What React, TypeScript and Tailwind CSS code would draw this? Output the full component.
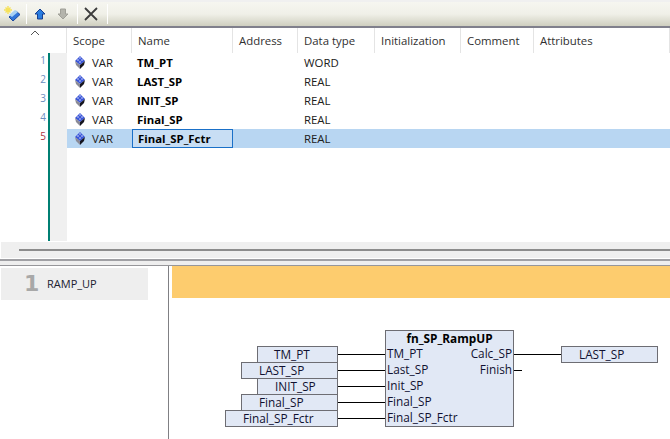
const font = "font-['Open_Sans','DejaVu_Sans',sans-serif]";

const cols = [
  { w: 'w-[65px] shadow-[-1px_0_0_#e4e4e4]', label: 'Scope' },
  { w: 'w-[101px]', label: 'Name' },
  { w: 'w-[65px]', label: 'Address' },
  { w: 'w-[77px]', label: 'Data type' },
  { w: 'w-[86px]', label: 'Initialization' },
  { w: 'w-[73px]', label: 'Comment' },
  { w: 'w-[136px]', label: 'Attributes' },
];

const rows = [
  { n: 1, name: 'TM_PT', type: 'WORD' },
  { n: 2, name: 'LAST_SP', type: 'REAL' },
  { n: 3, name: 'INIT_SP', type: 'REAL' },
  { n: 4, name: 'Final_SP', type: 'REAL' },
  { n: 5, name: 'Final_SP_Fctr', type: 'REAL', selected: true },
];

function VarIcon() {
  return (
    <svg width="10" height="13" viewBox="0 0 10 13" className="shrink-0">
      <path d="M5 0 10 5 5 9 0 5z" fill="#3a55d8" />
      <path d="M0 5 5 9v4L1 9z" fill="#8a8a96" />
      <path d="M10 5 5 9v4l4-4z" fill="#15151f" />
      <path d="M5 1 6 2 5 3 4 2zM3 3 4 4 3 5 2 4zM7 3 8 4 7 5 6 4zM5 5 6 6 5 7 4 6z" fill="#c4d0f4" />
    </svg>
  );
}

function Toolbar() {
  return (
    <div className="h-[24px] flex items-center bg-gradient-to-b from-[#f6f6f0] via-[#f0f0e8] to-[#cfcfc0]">
      <svg width="20" height="20" viewBox="0 0 20 20" className="ml-[3px] mr-[2px]">
        <path d="M6 13 13 7l4 3.5-7 6.5z" fill="#2f74d8" stroke="#1c4aa0" strokeWidth="1" />
        <path d="M6 11l6-5 3 2-6 5z" fill="#a6d0f4" />
        <path d="M5 2v8M1 6h8M2.5 3.5l5 5M7.5 3.5l-5 5" stroke="#f6e25a" strokeWidth="1.4" />
      </svg>
      <div className="w-px h-[20px] bg-white ml-[1px]" />
      <svg width="12" height="12" viewBox="0 0 12 12" className="ml-[7px]">
        <path d="M6 1 11 6H8.5v5h-5V6H1z" fill="#2a7de0" stroke="#163f90" strokeWidth="1" />
      </svg>
      <svg width="12" height="12" viewBox="0 0 12 12" className="ml-[11px]">
        <path d="M6 11 1 6h2.5V1h5v5H11z" fill="#b4b4ac" stroke="#a0a098" strokeWidth="1" />
      </svg>
      <div className="w-px h-[20px] bg-white ml-[8px]" />
      <svg width="16" height="16" viewBox="0 0 16 16" className="ml-[5px]">
        <path d="M2 2 14 14M14 2 2 14" stroke="#3c3c3c" strokeWidth="1.8" />
      </svg>
      <div className="w-px h-[20px] bg-white ml-[8px]" />
    </div>
  );
}

function VarTable() {
  return (
    <div className="flex h-[214px]">
      <div className="w-[48px] relative shrink-0">
        <svg width="10" height="6" viewBox="0 0 10 6" className="ml-[30px] mt-[2px]">
          <path d="M1 5 5 1l4 4" fill="none" stroke="#555" strokeWidth="1" />
        </svg>
        <div className="mt-[15px] flex flex-col items-end pr-[2px]">
          {rows.map((r) => (
            <div
              key={r.n}
              className={`h-[19px] text-[10px] leading-[19px] ${r.selected ? 'text-[#b03040]' : 'text-[#6a8cc0]'}`}
            >
              {r.n}
            </div>
          ))}
        </div>
      </div>
      <div className="w-[2px] mt-[25px] mb-[1px] bg-[#007f73] shrink-0" />
      <div className="w-[17px] mt-[25px] mb-[1px] bg-[#f0f0f0] shrink-0" />
      <div className="flex-1">
        <div className="flex h-[25px]">
          {cols.map((c) => (
            <div
              key={c.label}
              className={`${c.w} border-r border-[#e4e4e4] pl-[6px] leading-[25px] text-[#303030]`}
            >
              {c.label}
            </div>
          ))}
        </div>
        {rows.map((r) => (
          <div
            key={r.n}
            className={`flex h-[19px] leading-[19px] text-[#202020] ${r.selected ? 'bg-[#b8d6f2]' : ''}`}
          >
            <div className="w-[65px] flex items-center gap-[7px] pl-[8px]">
              <VarIcon />
              <span>VAR</span>
            </div>
            <div
              className={`w-[101px] pl-[5px] font-bold text-black ${r.selected ? 'bg-[#c8def4] border border-[#1a70c8] pl-[4px] leading-[17px]' : ''}`}
            >
              {r.name}
            </div>
            <div className="w-[65px]" />
            <div className="pl-[6px]">{r.type}</div>
          </div>
        ))}
      </div>
    </div>
  );
}

function Splitter() {
  return (
    <>
      <div className="h-[16px] bg-[#efefef] flex items-center pl-[18px] ml-[1px]">
        <div className="h-[2px] flex-1 bg-[#8c8c8c]" />
      </div>
      <div className="h-[2px] mt-[1px] bg-[#a0a0a4]" />
      <div className="h-[4px] bg-[#eeeeee]" />
      <div className="h-[1px] bg-[#96969a]" />
    </>
  );
}

function Box({ x, y, w, label, pl }: { x: number; y: number; w: number; label: string; pl: number }) {
  return (
    <div
      className="absolute h-[17px] bg-[#e1e8f5] border border-[#6d6d73] leading-[14px] text-[11.8px] text-[#101030] whitespace-nowrap"
      style={{ left: x, top: y, width: w, paddingLeft: pl }}
    >
      {label}
    </div>
  );
}

function Network() {
  const wires = [88, 104, 120, 136, 152];
  return (
    <div className="relative flex-1 flex overflow-hidden">
      <div className="w-[168px] shrink-0">
        <div className="ml-[1px] mt-[2px] w-[147px] h-[32px] bg-[#eeeeee] flex items-center">
          <span className="ml-[23px] w-[23px] text-[22px] leading-none font-bold text-[#a8a8a8] font-['DejaVu_Sans',sans-serif]">
            1
          </span>
          <span className="text-[#202030] text-[11px]">RAMP_UP</span>
        </div>
      </div>
      <div className="w-[1px] bg-[#808084] shrink-0" />
      <div className="flex-1 pl-[3px]">
        <div className="h-[32px] bg-[#fdcc6e]" />
      </div>

      <svg width="670" height="173" className="absolute left-0 top-0" fill="none">
        {wires.map((y) => (
          <path key={y} d={`M338 ${y + 0.5}H385`} stroke="#000" />
        ))}
        <path d="M514 88.5H561M514 104.5H522" stroke="#000" />
      </svg>

      <Box x={257} y={80} w={81} label="TM_PT" pl={16} />
      <Box x={241} y={96} w={97} label="LAST_SP" pl={17} />
      <Box x={257} y={112} w={81} label="INIT_SP" pl={17} />
      <Box x={241} y={128} w={97} label="Final_SP" pl={17} />
      <Box x={225} y={144} w={113} label="Final_SP_Fctr" pl={17} />
      <Box x={561} y={80} w={97} label="LAST_SP" pl={17} />

      <div className="absolute left-[385px] top-[64px] w-[129px] h-[97px] bg-[#e1e8f5] border border-[#6d6d73] text-[11.8px] text-[#101030] px-[1px]">
        <div className="text-center font-bold text-black leading-[14px]">fn_SP_RampUP</div>
        <div className="flex justify-between h-[16px] leading-[16px]">
          <span>TM_PT</span>
          <span>Calc_SP</span>
        </div>
        <div className="flex justify-between h-[16px] leading-[16px]">
          <span>Last_SP</span>
          <span>Finish</span>
        </div>
        <div className="h-[16px] leading-[16px]">Init_SP</div>
        <div className="h-[16px] leading-[16px]">Final_SP</div>
        <div className="h-[16px] leading-[16px]">Final_SP_Fctr</div>
      </div>
    </div>
  );
}

export default function App() {
  return (
    <div className={`w-[670px] h-[439px] bg-white flex flex-col overflow-hidden text-[11.4px] ${font}`}>
      <div className="h-[2px] bg-[#f0f0f0]" />
      <Toolbar />
      <div className="h-[2px] bg-[#80808c]" />
      <VarTable />
      <Splitter />
      <Network />
    </div>
  );
}
